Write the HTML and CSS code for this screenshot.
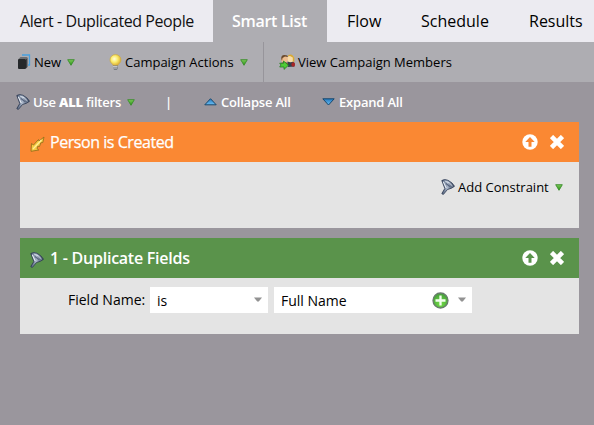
FILE: index.html
```html
<!DOCTYPE html>
<html lang="en">
<head>
<meta charset="utf-8">
<title>Alert - Duplicated People</title>
<link rel="stylesheet" href="styles.css">
</head>
<body>
<svg class="defs" width="0" height="0" aria-hidden="true">
  <defs>
    <linearGradient id="steel" x1="0" y1="0" x2="1" y2="0"><stop offset="0" stop-color="#4b5a75"/><stop offset=".45" stop-color="#a9b5c8"/><stop offset="1" stop-color="#34425d"/></linearGradient>
    <linearGradient id="leaf" x1="0" y1="0" x2="0" y2="1"><stop offset="0" stop-color="#7ecb5c"/><stop offset="1" stop-color="#25910f"/></linearGradient>
    <linearGradient id="sky" x1="0" y1="0" x2="0" y2="1"><stop offset="0" stop-color="#2478bd"/><stop offset="1" stop-color="#6bc0f5"/></linearGradient>
    <radialGradient id="glow" cx=".4" cy=".4" r=".6"><stop offset="0" stop-color="#fffde0"/><stop offset=".5" stop-color="#fbec6c"/><stop offset="1" stop-color="#dcae34"/></radialGradient>
    <radialGradient id="plus" cx=".5" cy=".7" r=".6"><stop offset="0" stop-color="#72dc45"/><stop offset="1" stop-color="#4aa53c"/></radialGradient>
    <symbol id="funnel" viewBox="0 0 14 16">
      <path d="M.8 1.500Q3.500-.3 7 1.300 11.500 3.500 13.500 7.300 11 9.500 6.500 10.500L2.300 15.500.8 14.600 3.800 9.500Z" fill="url(#steel)" stroke="#2c3951" stroke-width=".8"/>
      <path d="M2.300 2.800 5.300 9.300" fill="none" stroke="#e8edf4" stroke-width="1.100"/>
      <path d="M4.200 2.200Q8.500 3 11.500 7" fill="none" stroke="#dce3ec" stroke-width=".9"/>
      <path d="M5 4.500 9.500 8" fill="none" stroke="#59667e" stroke-width="1.200"/>
    </symbol>
    <symbol id="caret" viewBox="0 0 8 7"><path d="M.7.700H7.300L4 6.300Z" fill="url(#leaf)" stroke="#3b8d2c" stroke-width=".9" stroke-linejoin="round"/></symbol>
    <symbol id="up" viewBox="0 0 16 16"><circle cx="8" cy="8" r="7.700" fill="#fff"/><path fill="currentColor" d="M8 2.900 12.700 8H9.500V12.700H6.500V8H3.300Z"/></symbol>
    <symbol id="close" viewBox="0 0 14 14"><path d="M1.500 1.500 12.500 12.500M12.500 1.500 1.500 12.500" stroke="#fff" stroke-width="4.600"/></symbol>
  </defs>
</svg>

<nav class="tabs">
  <div class="tab tab-title"><span class="t-title">Alert - Duplicated People</span></div>
  <div class="tab tab-active"><span class="t-smart">Smart List</span></div>
  <div class="tab tab-flow"><span>Flow</span></div>
  <div class="tab tab-schedule"><span>Schedule</span></div>
  <div class="tab tab-results"><span>Results</span></div>
</nav>

<div class="toolbar">
  <button class="tool tool-new">
    <svg width="13" height="16" viewBox="0 0 13 16"><path d="M4 1H11.500V11H10" fill="none" stroke="#47a0df" stroke-width="1.300"/><path d="M.5 5 2.500 3H9.500L8 5Z" fill="#6c6f73"/><rect x="0" y="5" width="8" height="10" rx="1" fill="#25282b"/><path d="M8 5 9.500 3.500V13L8 14.500Z" fill="#3a3e42"/></svg>
    <span>New</span>
    <svg class="caret" width="8" height="7"><use href="#caret"/></svg>
  </button>
  <button class="tool tool-actions">
    <svg width="13" height="17" viewBox="0 0 13 17"><path d="M6.500.600A5.300 5.300 0 0 0 1 6Q1 8.300 2.800 9.600 4 10.500 4 11.500H9Q9 10.500 10.200 9.600 12 8.300 12 6A5.300 5.300 0 0 0 6.500.600Z" fill="url(#glow)" stroke="#ccaa48" stroke-width=".7"/><path d="M4 11.500H9V14.500L7.700 16H5.300L4 14.500Z" fill="#777b81"/><path d="M4 12.500H8.500M4 14H8.500" stroke="#d5d7da" stroke-width=".8"/></svg>
    <span>Campaign Actions</span>
    <svg class="caret" width="8" height="7"><use href="#caret"/></svg>
  </button>
  <button class="tool tool-members">
    <svg width="17" height="16" viewBox="0 0 17 16"><path d="M8.500 8 12 6.500 15.500 9V12.500L9 13Z" fill="#34404e"/><ellipse cx="14.200" cy="10.500" rx="1.800" ry="2.300" fill="#a82424"/><circle cx="11.500" cy="4.800" r="3.400" fill="#f7dcaa"/><path d="M8.500 2.500Q9 .5 11.500.500T15.300 4V8L13.800 7.500V3.500L11 2Z" fill="#d8aa34"/><circle cx="5.500" cy="5.200" r="3.300" fill="#efbd8c"/><path d="M2.300 5Q1.800 1 5.500 1T8.800 3L6 2.500 3.500 4 3 7Z" fill="#69492c"/><path d="M2 9 5.500 8 9 9V12H2Z" fill="#8d5b38"/><path d="M.7 9.200H4.500V7L9.500 11.200 5 15.400V13H.7L2 11Z" fill="#4fcc37" stroke="#277e25" stroke-width=".8"/></svg>
    <span>View Campaign Members</span>
  </button>
</div>

<div class="filters">
  <svg class="f-funnel" width="14" height="16"><use href="#funnel"/></svg>
  <span class="f-use">Use <b>ALL</b> filters</span>
  <svg class="f-caret" width="8" height="7"><use href="#caret"/></svg>
  <span class="f-bar">|</span>
  <svg class="f-tri" width="13" height="8" viewBox="0 0 13 8"><path d="M6.500.700 12.200 6.800H.8Z" fill="url(#sky)" stroke="#17476d" stroke-width="1" stroke-linejoin="round"/></svg>
  <span class="f-collapse">Collapse All</span>
  <svg class="f-tri" width="13" height="8" viewBox="0 0 13 8"><path d="M.8.800H12.200L6.500 7Z" fill="url(#sky)" stroke="#17476d" stroke-width="1" stroke-linejoin="round"/></svg>
  <span class="f-expand">Expand All</span>
</div>

<main class="cards">
  <section class="card trigger">
    <header>
      <svg class="head-icon" width="15" height="16" viewBox="0 0 15 16"><path d="M14 1 12.800 6.500 10.800 6.800 9.500 10.500 7.800 10.200 7 12.500 8.800 14 1 15.300 1.500 7.500 3.500 9 8.500 3.500 9 5Z" fill="#f5ca43" stroke="#98701c" stroke-width=".9" stroke-linejoin="round"/><path d="M3 13 11.500 4" stroke="#fff09a" stroke-width="1.200"/></svg>
      <h2>Person is Created</h2>
      <svg class="up" width="16" height="16"><use href="#up"/></svg>
      <svg class="close" width="14" height="14"><use href="#close"/></svg>
    </header>
    <div class="body">
      <button class="constraint">
        <svg width="14" height="16"><use href="#funnel"/></svg>
        <span>Add Constraint</span>
        <svg class="caret" width="8" height="7"><use href="#caret"/></svg>
      </button>
    </div>
  </section>

  <section class="card filter">
    <header>
      <svg class="head-icon" width="14" height="16"><use href="#funnel"/></svg>
      <h2>1 - Duplicate Fields</h2>
      <svg class="up" width="16" height="16"><use href="#up"/></svg>
      <svg class="close" width="14" height="14"><use href="#close"/></svg>
    </header>
    <div class="body">
      <span class="label">Field Name:</span>
      <div class="select operator"><span>is</span><svg class="drop" width="8" height="5" viewBox="0 0 8 5"><path d="M0 .500H8L4.800 4.500H3.200Z" fill="#929292"/></svg></div>
      <div class="select value"><span>Full Name</span>
        <svg class="add" width="17" height="17" viewBox="0 0 17 17"><circle cx="8.500" cy="8.500" r="7.500" fill="url(#plus)" stroke="#687c6c" stroke-width="1.300"/><path d="M8.500 3.500V13.500M3.500 8.500H13.500" stroke="#f3fff0" stroke-width="2.300"/></svg>
        <svg class="drop" width="8" height="5" viewBox="0 0 8 5"><path d="M0 .500H8L4.800 4.500H3.200Z" fill="#929292"/></svg></div>
    </div>
  </section>
</main>
</body>
</html>
```
FILE: styles.css
```css
* { box-sizing: border-box; }
body {
  margin: 0;
  height: 425px;
  overflow: hidden;
  background: #9a969d;
  color: #000;
  font: 14px/20px "Open Sans", sans-serif;
  white-space: nowrap;
}
svg { display: block; flex: none; }
.defs { position: absolute; }
button { border: 0; padding: 0; background: none; color: inherit; font: inherit; }

.tabs { display: flex; height: 42px; background: #ecebf1; font-size: 16px; }
.tab { display: flex; align-items: center; flex: none; }
.tab-title { width: 213px; padding-left: 20px; }
.t-title { letter-spacing: -.42px; color: #111; }
.tab-active { width: 114px; padding-left: 19px; background: #aeadb2; color: #fff; font-weight: 600; }
.t-smart { letter-spacing: -.3px; }
.tab-flow { width: 94px; padding-left: 20px; }
.tab-schedule { width: 108px; }
.tab-results { width: 65px; }

.toolbar { display: flex; height: 40px; background: #aeadb2; font-size: 13px; }
.tool { display: flex; align-items: center; }
.tool span { flex: none; }
.tool-new { width: 109px; padding-left: 18px; }
.tool-new span { width: 31px; margin: 0 0 0 3px; text-align: left; }
.tool-new .caret { margin-left: 2px; }
.tool-actions { width: 155px; border-right: 1px solid #97959b; }
.tool-actions span { width: 115px; margin-left: 3px; text-align: left; }
.tool-members { padding-left: 15px; }
.tool-members span { margin-left: 2px; }

.filters { display: flex; align-items: center; height: 40px; padding-left: 16px; color: #fff; font-size: 13px; font-weight: 600; }
.filters span { flex: none; }
.f-use { width: 94px; margin-left: 3px; letter-spacing: -.22px; }
.f-use b { font-weight: 800; }
.f-bar { margin-left: 30px; width: 39px; }
.f-collapse { width: 101px; margin-left: 4px; letter-spacing: -.2px; }
.f-expand { margin-left: 4px; letter-spacing: -.2px; }

.cards { display: flex; flex-direction: column; gap: 10px; width: 559px; margin-left: 20px; }
.card header { display: flex; align-items: center; height: 40px; padding: 0 15px 0 10px; }
.card h2 { flex: 1; margin: 0 0 0 5px; color: #fff; font-size: 16px; font-weight: 400; line-height: 22px; letter-spacing: -.45px; }
.trigger h2 { -webkit-text-stroke: .25px #fff; }
.head-icon { margin-top: 4px; }
.close { margin-left: 12px; }
.trigger header { background: #fa8833; color: #fa8833; }
.filter header { background: #5a934b; color: #5a934b; }
.filter h2 { margin-left: 6px; font-weight: 600; letter-spacing: -.25px; }
.body { display: flex; background: #e4e4e4; }
.trigger .body { height: 66px; justify-content: flex-end; padding: 15px 16px 0 0; }
.constraint { display: flex; align-items: center; height: 20px; font-size: 13px; }
.constraint span { width: 97px; margin-left: 3px; text-align: left; }
.filter .body { height: 56px; padding: 9px 0 0 48px; }
.label { width: 82px; line-height: 26px; }
.select { display: flex; align-items: center; height: 26px; background: #fff; }
.select span { flex: 1; padding-top: 2px; }
.drop { margin-bottom: 2px; }
.operator { width: 118px; margin-right: 6px; padding: 0 6px 0 7px; }
.value { width: 198px; padding: 0 6px 0 7px; }
.add { margin-right: 9px; }
```
